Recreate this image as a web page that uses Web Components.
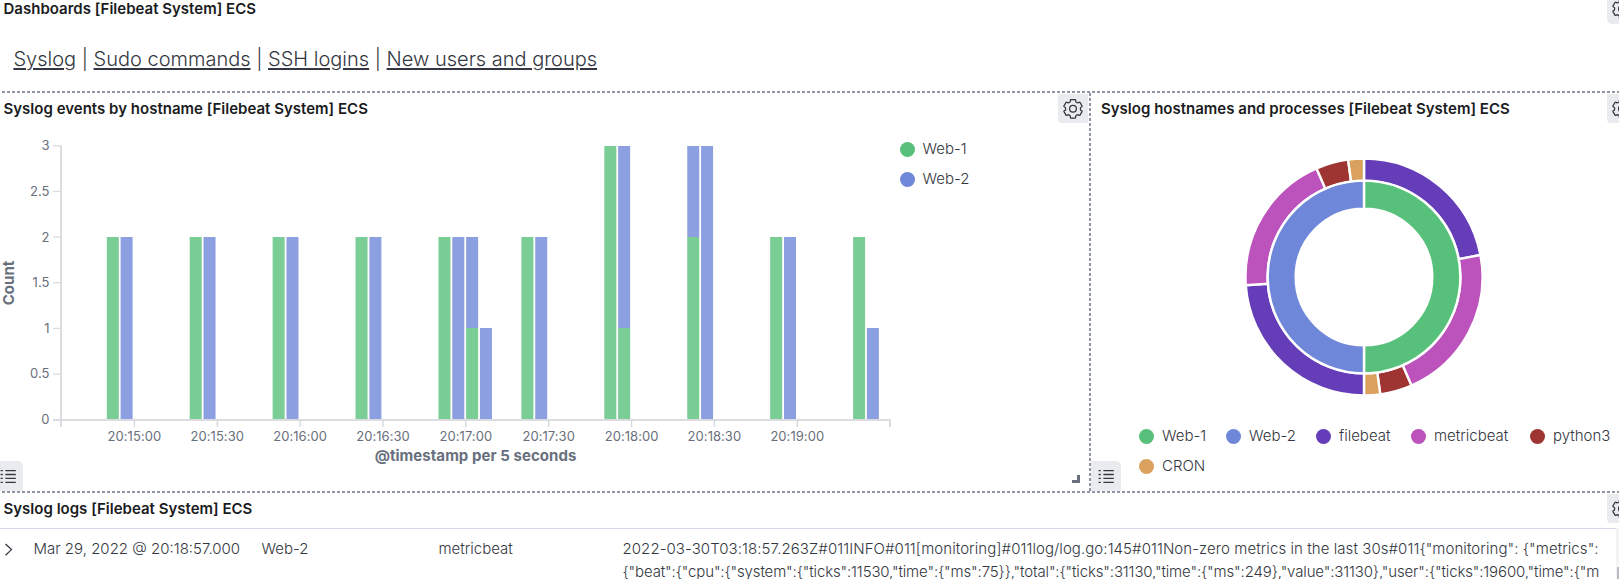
<!DOCTYPE html>
<html lang="en"><head><meta charset="utf-8"><title>Syslog dashboard</title>
<style>
html,body{margin:0;height:100%;overflow:hidden;background:#fff}
body{font-family:Inter,"Liberation Sans",sans-serif;font-size:15px;font-weight:300;color:#343741}
</style></head><body>
<dash-board></dash-board>
<script>
const define=(name,html,init)=>customElements.define(name,class extends HTMLElement{
  connectedCallback(){
    if(this.shadowRoot)return;
    const t=document.createElement('template');
    t.innerHTML=html;
    const root=this.attachShadow({mode:'open'});
    root.append(t.content.cloneNode(true));
    if(init)init(root,this);
  }
});

// Six-toothed gear outline
const polar=(r,deg)=>[(r*Math.sin(deg*Math.PI/180)).toFixed(2),(-r*Math.cos(deg*Math.PI/180)).toFixed(2)].join(' ');
let gear='';
for(let k=0;k<6;k++){
  const a=k*60;
  gear+=(k?'L':'M')+polar(7.7,a-20)+'L'+polar(9,a-17)+'Q'+polar(9.8,a-15)+' '+polar(9.35,a-9)+'L'+polar(9.35,a+9)+'Q'+polar(9.8,a+15)+' '+polar(9,a+17)+'L'+polar(7.7,a+20)+'Q'+polar(7.1,a+30)+' '+polar(7.7,a+40);
}
gear+='Z';

define('panel-button',`<style>
:host{display:block;width:30px;height:30px;background:#e9ebee;border-radius:0 0 0 5px}
:host([icon=list]){border-radius:0 5px 0 0}
svg{display:block}
</style><svg width="30" height="30" fill="none" stroke="#343741"></svg>`,(r,el)=>{
  r.querySelector('svg').innerHTML=el.getAttribute('icon')==='list'
  ?'<path stroke-width="1.3" d="M7.6 9.6h2.2M12.4 9.6h10.4M7.6 13.5h2.2M12.4 13.5h10.4M7.6 17.4h2.2M12.4 17.4h10.4M7.6 21.3h2.2M12.4 21.3h10.4"/>'
  :`<g transform="translate(15 14.8)" stroke-width="1.25" stroke-linejoin="round"><path d="${gear}"/><circle r="3.4"/></g>`;
});

define('panel-title',`<style>:host{display:block;font-size:15px;font-weight:600;line-height:20px;height:20px;color:#1a1c21;white-space:nowrap;letter-spacing:.012px}</style><slot></slot>`);

define('dash-line',`<style>:host{display:block;height:2px;background:repeating-linear-gradient(90deg,#fff 0 2px,#9096a3 2px 5px)}
:host([vertical]){height:auto;width:2px;background:repeating-linear-gradient(#9096a3 0 3px,#fff 3px 5px)}</style>`);

define('nav-links',`<style>
:host{display:block;font-size:20px;line-height:30px;white-space:nowrap}
a{color:inherit;text-decoration:underline;text-underline-offset:2px;text-decoration-thickness:2px}
</style><a>Syslog</a> | <a>Sudo commands</a> | <a>SSH logins</a> | <a>New users and groups</a>`);

define('legend-item',`<style>
:host{display:flex;align-items:center;height:30px;line-height:30px;white-space:nowrap}
i{width:15px;height:15px;border-radius:50%;background:var(--c);margin-right:8px;flex:none}
</style><i></i><span><slot></slot></span>`,(r,el)=>el.style.setProperty('--c',el.getAttribute('color')));

// Stacked histogram: each bar is [five-second slot, Web-1 count, Web-2 count]
const bars=[[0,2,0],[1,0,2],[6,2,0],[7,0,2],[12,2,0],[13,0,2],[18,2,0],[19,0,2],[24,2,0],[25,0,2],[26,1,1],[27,0,1],[30,2,0],[31,0,2],[36,3,0],[37,1,2],[42,2,1],[43,0,3],[48,2,0],[49,0,2],[54,2,0],[55,0,1]];
define('bar-chart',`<style>
:host{display:block;width:895px;height:350px}
svg{display:block}
text{font-size:13px;font-weight:400;fill:#69707d;letter-spacing:.05px}
.t{font-size:15px;font-weight:700}
</style><svg width="895" height="350"></svg>`,r=>{
  let s='';const y0=296,u=91;
  for(const [i,g,b] of bars){
    const x=106.8+i*13.82;
    if(g)s+=`<rect x="${x}" y="${y0-g*u}" width="12" height="${g*u}" fill="#79cd95"/>`;
    if(b)s+=`<rect x="${x}" y="${y0-(g+b)*u}" width="12" height="${b*u}" fill="#8c9fe0"/>`;
  }
  s+='<path d="M61 22V304M53 297H891M890 297V304" stroke="#dadcdf" stroke-width="2" fill="none"/>';
  ['0','0.5','1','1.5','2','2.5','3'].forEach((t,i)=>{
    const y=296.7-i*45.65;
    s+=`<path d="M53 ${y}H61" stroke="#dadcdf" stroke-width="1.3"/><text x="49.5" y="${y+4.4}" text-anchor="end">${t}</text>`;
  });
  ['20:15:00','20:15:30','20:16:00','20:16:30','20:17:00','20:17:30','20:18:00','20:18:30','20:19:00'].forEach((t,i)=>{
    const x=134.4+i*82.86;
    s+=`<path d="M${x} 297V304" stroke="#d4d6da" stroke-width="1.3"/><text x="${x}" y="318" text-anchor="middle">${t}</text>`;
  });
  s+='<text class="t" x="475.5" y="338" text-anchor="middle">@timestamp per 5 seconds</text>';
  s+='<text class="t" transform="translate(14 160) rotate(-90)" text-anchor="middle">Count</text>';
  r.querySelector('svg').innerHTML=s;
});

define('donut-chart',`<style>:host{display:block;width:240px;height:240px}svg{display:block}</style>
<svg width="240" height="240"><g transform="translate(120 120)" stroke="#fff" stroke-width="2.4"></g></svg>`,r=>{
  const sec=(a,b,o,i,c)=>`<path fill="${c}" d="M${polar(o,a)}A${o} ${o} 0 0 1 ${polar(o,b)}L${polar(i,b)}A${i} ${i} 0 0 0 ${polar(i,a)}Z"/>`;
  const V='#663db8',M='#bc52bc',P='#9e3533',C='#daa05d';
  r.querySelector('g').innerHTML=
   [[0,79.3,V],[79.3,156.4,M],[156.4,172.1,P],[172.1,180,C],[180,266,V],[266,336.4,M],[336.4,352.3,P],[352.3,360,C]].map(([a,b,c])=>sec(a,b,118.5,96.4,c)).join('')
   +sec(0,179.99,96.4,68.3,'#57c17b')+sec(180,359.99,96.4,68.3,'#6f87d8');
});

define('log-row',`<style>
:host{display:grid;grid-template-columns:33.5px 228px 177px 184px 1fr;line-height:22.5px;white-space:nowrap}
svg{display:block;margin:4px 0 0 4px}
.m{display:flex;flex-direction:column}
.a{letter-spacing:var(--a,0)}.b{letter-spacing:var(--b,0)}
</style>
<svg width="10" height="15" fill="none" stroke="#343741" stroke-width="1.25"><path d="M1.5 2l6 5.6-6 5.6"/></svg>
<span><slot name="time"></slot></span><span><slot name="host"></slot></span><span><slot name="process"></slot></span>
<div class="m"><span class="a"><slot name="line1"></slot></span><span class="b"><slot name="line2"></slot></span></div>`);

define('dash-board',`<style>
:host{display:grid;width:1619px;height:579px;overflow:hidden;grid-template-rows:91px 2px 398px 2px 86px}
.head{display:flex;justify-content:space-between;height:30px;overflow:hidden}
.head panel-title{margin:6px 0 0 3.5px}
.edge{margin-right:-18px;flex:none}
section{min-width:0;overflow:hidden}
.top .head{height:24px}
.top panel-title{margin-top:-1px}.top .edge{margin-top:-6px}
nav-links{margin:20px 0 0 13.4px}
.mid{display:grid;grid-template-columns:1089px 2px 528px}
.wide,.side{position:relative}
.wide .head panel-button{margin:1px 1px 0 0}
.row{display:flex;height:350px}
.row .leg{margin:11px 0 0 4.5px}
.l1{position:absolute;left:-7px;bottom:0}
.l2{position:absolute;left:0;bottom:0}
.grip{position:absolute;right:9px;bottom:8px;width:5px;height:5px;border:solid #69707d;border-width:0 3px 3px 0}
.side .head panel-title{margin-left:10px}
.side .edge,.bot .edge{margin-top:1px}
donut-chart{margin:33.6px 0 0 153px}
.legend{display:flex;flex-wrap:wrap;margin:24.5px 0 0 48px}
.body{display:flex;height:50px;margin-top:5px}
log-row{border-top:1px solid #d3dae6;padding-top:9px;flex:none;width:1616px;box-sizing:border-box}
.bar{flex:1;background:#f3f4f5;padding:39px 0 0 1px}
.bar b{display:block;height:20px;background:#b9bbc0}
</style>
<section class="top"><div class="head"><panel-title>Dashboards [Filebeat System] ECS</panel-title><panel-button class="edge"></panel-button></div><nav-links></nav-links></section>
<dash-line></dash-line>
<div class="mid">
<section class="wide"><div class="head"><panel-title>Syslog events by hostname [Filebeat System] ECS</panel-title><panel-button></panel-button></div>
<div class="row"><bar-chart></bar-chart><div class="leg"><legend-item color="#57c17b">Web-1</legend-item><legend-item color="#6f87d8">Web-2</legend-item></div></div>
<panel-button class="l1" icon="list"></panel-button><div class="grip"></div></section>
<dash-line vertical></dash-line>
<section class="side"><div class="head"><panel-title>Syslog hostnames and processes [Filebeat System] ECS</panel-title><panel-button class="edge"></panel-button></div>
<donut-chart></donut-chart>
<div class="legend"><legend-item style="width:87px" color="#57c17b">Web-1</legend-item><legend-item style="width:90px" color="#6f87d8">Web-2</legend-item><legend-item style="width:95px" color="#663db8">filebeat</legend-item><legend-item style="width:119px" color="#bc52bc">metricbeat</legend-item><legend-item color="#9e3533">python3</legend-item><legend-item color="#daa05d">CRON</legend-item></div>
<panel-button class="l2" icon="list"></panel-button></section>
</div>
<dash-line></dash-line>
<section class="bot"><div class="head"><panel-title>Syslog logs [Filebeat System] ECS</panel-title><panel-button class="edge"></panel-button></div>
<div class="body"><log-row style="--a:.068px;--b:-.14px"><span slot="time">Mar 29, 2022 @ 20:18:57.000</span><span slot="host">Web-2</span><span slot="process">metricbeat</span><span slot="line1">2022-03-30T03:18:57.263Z#011INFO#011[monitoring]#011log/log.go:145#011Non-zero metrics in the last 30s#011{"monitoring": {"metrics":</span><span slot="line2">{"beat":{"cpu":{"system":{"ticks":11530,"time":{"ms":75}},"total":{"ticks":31130,"time":{"ms":249},"value":31130},"user":{"ticks":19600,"time":{"m</span></log-row><div class="bar"><b></b></div></div></section>`);
</script></body></html>
